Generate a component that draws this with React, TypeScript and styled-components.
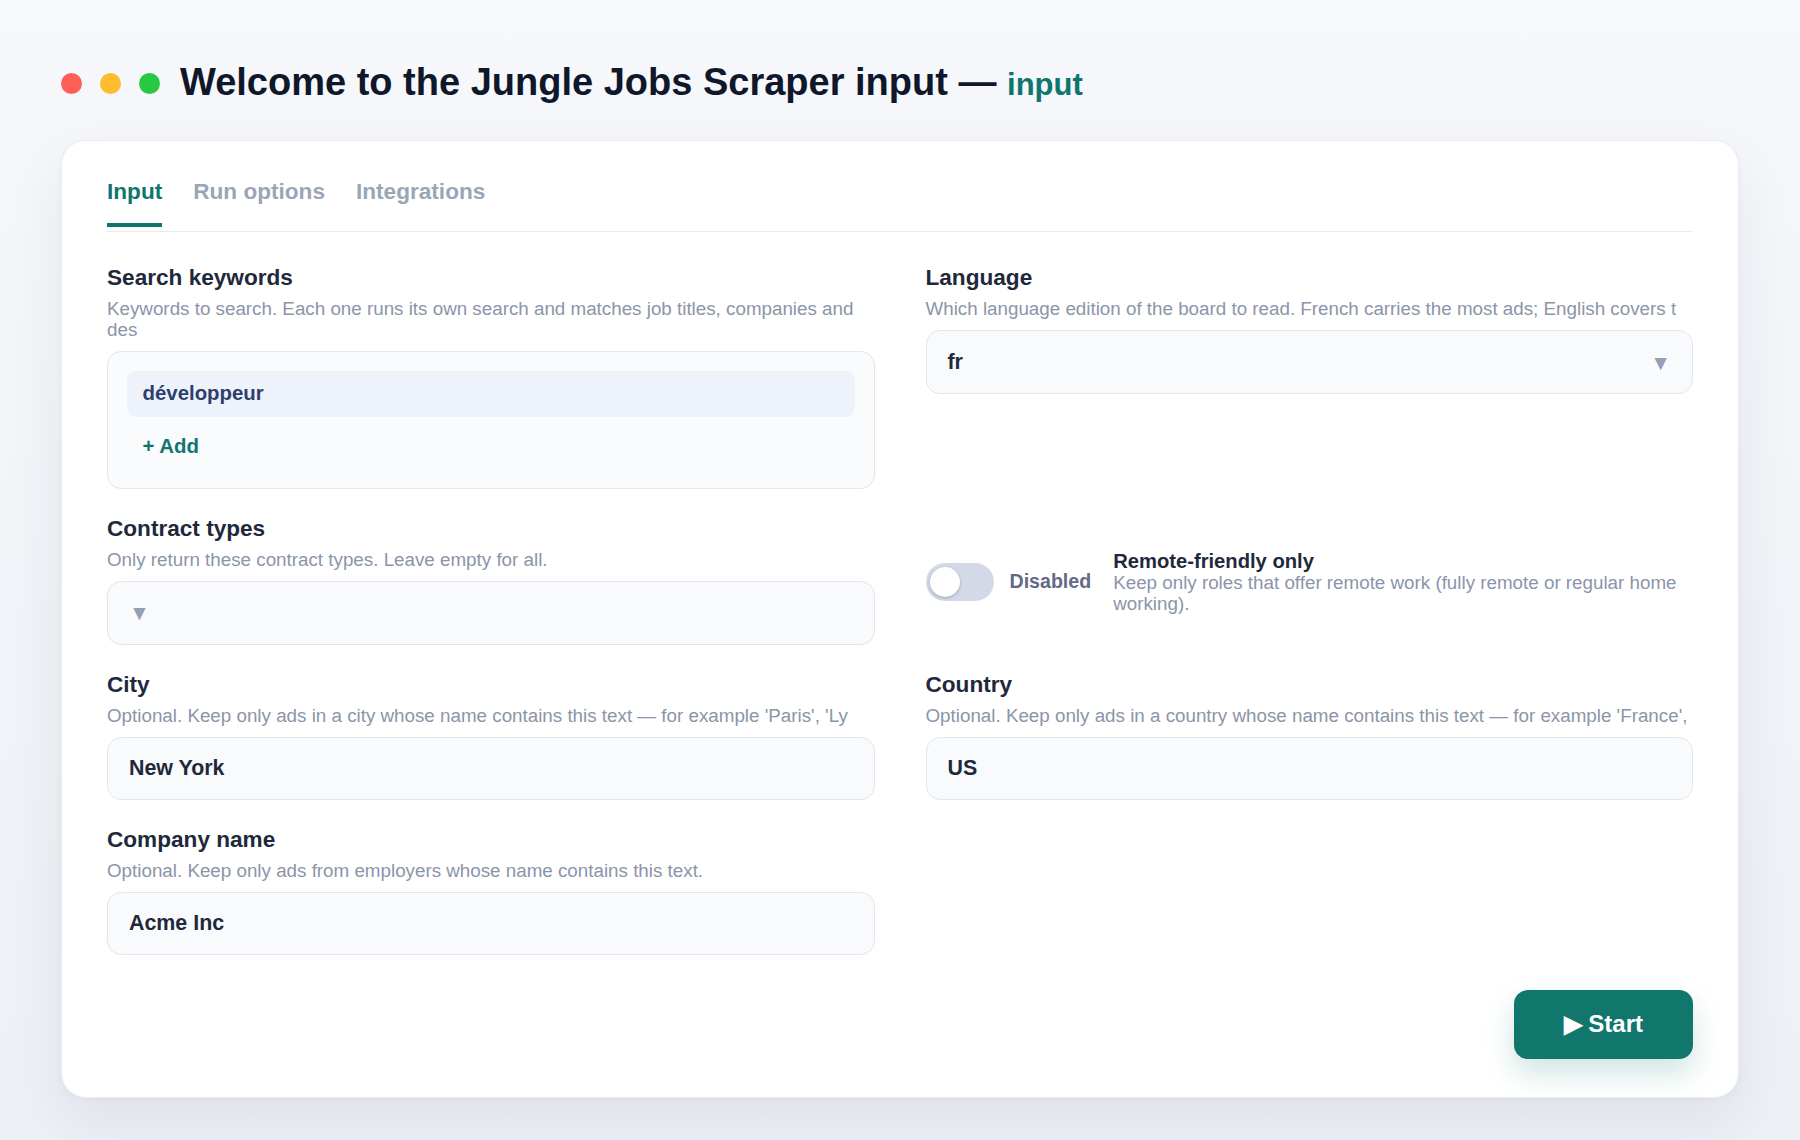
import React, { useState } from 'react';
import styled, { createGlobalStyle } from 'styled-components';

const GlobalStyle = createGlobalStyle`
  * {
    box-sizing: border-box;
  }

  body {
    margin: 0;
    font-family: "Liberation Sans", Arial, sans-serif;
    background: linear-gradient(180deg, #f6f8fb 0%, #f0f3f7 60%, #edf0f5 100%);
    min-height: 100vh;
  }
`;

const Page = styled.div`
  min-height: 100vh;
  padding: 60px 61px 40px;
`;

const Header = styled.header`
  display: flex;
  align-items: center;
  gap: 20px;
  height: 46px;
`;

const Dots = styled.div`
  display: flex;
  gap: 18px;
`;

const Dot = styled.span<{ $color: string }>`
  width: 21px;
  height: 21px;
  border-radius: 50%;
  background: ${(p) => p.$color};
`;

const Title = styled.h1`
  margin: 0;
  font-size: 38px;
  line-height: 46px;
  font-weight: 700;
  color: #0f172a;
  white-space: nowrap;
`;

const TitleAccent = styled.span`
  font-size: 31px;
  font-weight: 600;
  color: #0f766e;
`;

const Card = styled.main`
  margin-top: 34px;
  background: #ffffff;
  border: 1px solid #e9edf3;
  border-radius: 25px;
  padding: 38px 45px 38px;
  box-shadow: 0 24px 60px rgba(30, 41, 70, 0.07), 0 2px 6px rgba(30, 41, 70, 0.03);
`;

const TabBar = styled.nav`
  display: flex;
  gap: 31px;
  border-bottom: 1px solid #e8ecf1;
`;

const Tab = styled.button<{ $active?: boolean }>`
  background: none;
  border: none;
  padding: 0 0 18px;
  margin-bottom: 4px;
  font-family: inherit;
  font-size: 22.6px;
  line-height: 26px;
  font-weight: 700;
  color: ${(p) => (p.$active ? '#0f766e' : '#9aa5b8')};
  border-bottom: 4px solid ${(p) => (p.$active ? '#0f766e' : 'transparent')};
  cursor: pointer;
`;

const FormGrid = styled.div`
  margin-top: 33px;
  display: grid;
  grid-template-columns: 1fr 1fr;
  column-gap: 51px;
  row-gap: 27px;
  align-items: start;
`;

const Field = styled.div`
  display: flex;
  flex-direction: column;
  min-width: 0;
`;

const Label = styled.label`
  font-size: 22.6px;
  line-height: 26px;
  font-weight: 700;
  color: #1e293b;
`;

const Description = styled.p`
  margin: 7px 0 11px;
  font-size: 18.8px;
  line-height: 21px;
  color: #8b95a9;
`;

const KeywordBox = styled.div`
  display: flex;
  flex-direction: column;
  align-items: stretch;
  gap: 9px;
  padding: 18.5px 18.5px 22px;
  background: #f9fbfd;
  border: 1.5px solid #e2e7ee;
  border-radius: 14px;
`;

const Chip = styled.div`
  height: 46px;
  display: flex;
  align-items: center;
  padding: 0 16px;
  border-radius: 10px;
  background: #eef2fb;
  font-size: 20.4px;
  font-weight: 700;
  color: #2f3f6c;
`;

const AddButton = styled.button`
  align-self: flex-start;
  background: none;
  border: none;
  padding: 8px 16px;
  font-family: inherit;
  font-size: 20.4px;
  line-height: 24px;
  font-weight: 700;
  color: #0f766e;
  cursor: pointer;
`;

const Control = styled.div`
  height: 64px;
  display: flex;
  align-items: center;
  justify-content: space-between;
  padding: 0 21px;
  background: #f9fafc;
  border: 1.5px solid #e2e6ee;
  border-radius: 14px;
`;

const TextInput = styled.input`
  height: 63px;
  width: 100%;
  padding: 0 21px;
  background: #f9fafc;
  border: 1.5px solid #e2e6ee;
  border-radius: 14px;
  font-family: inherit;
  font-size: 21.4px;
  font-weight: 700;
  color: #1e293b;
  outline: none;
`;

const SelectValue = styled.span`
  font-size: 21.4px;
  font-weight: 700;
  color: #1e293b;
`;

const Caret = styled.span`
  font-size: 21px;
  color: #94a0b4;
  line-height: 1;
`;

const ToggleRow = styled.div`
  align-self: center;
  display: flex;
  align-items: center;
  padding-top: 3px;
`;

const Switch = styled.button<{ $on: boolean }>`
  position: relative;
  flex: none;
  width: 68px;
  height: 38px;
  border: none;
  border-radius: 19px;
  padding: 0;
  background: ${(p) => (p.$on ? '#0f766e' : '#d3d9e6')};
  cursor: pointer;

  &::after {
    content: '';
    position: absolute;
    top: 4px;
    left: ${(p) => (p.$on ? '34px' : '4px')};
    width: 30px;
    height: 30px;
    border-radius: 50%;
    background: #ffffff;
    box-shadow: 0 1px 3px rgba(30, 41, 70, 0.3);
  }
`;

const SwitchState = styled.span`
  margin: 0 22px 0 16px;
  font-size: 19.6px;
  font-weight: 700;
  color: #606b84;
  white-space: nowrap;
`;

const ToggleText = styled.div`
  display: flex;
  flex-direction: column;
  min-width: 0;
`;

const ToggleTitle = styled.span`
  font-size: 20.2px;
  line-height: 22px;
  font-weight: 700;
  color: #1e293b;
`;

const ToggleDescription = styled.span`
  font-size: 18.8px;
  line-height: 21px;
  color: #8b95a9;
`;

const Footer = styled.div`
  margin-top: 35px;
  display: flex;
  justify-content: flex-end;
`;

const StartButton = styled.button`
  height: 69px;
  padding: 0 50px;
  border: none;
  border-radius: 14px;
  background: #11766c;
  color: #ffffff;
  font-family: inherit;
  font-size: 24px;
  font-weight: 700;
  box-shadow: 0 14px 30px rgba(17, 118, 108, 0.2);
  cursor: pointer;
`;

const App = () => {
  const [tab, setTab] = useState('Input');
  const [remote, setRemote] = useState(false);
  const [city, setCity] = useState('New York');
  const [country, setCountry] = useState('US');
  const [company, setCompany] = useState('Acme Inc');

  return (
    <>
      <GlobalStyle />
      <Page>
        <Header>
          <Dots>
            <Dot $color="#ff5f57" />
            <Dot $color="#febc2e" />
            <Dot $color="#28c840" />
          </Dots>
          <Title>
            Welcome to the Jungle Jobs Scraper input — <TitleAccent>input</TitleAccent>
          </Title>
        </Header>

        <Card>
          <TabBar>
            {['Input', 'Run options', 'Integrations'].map((name) => (
              <Tab key={name} $active={tab === name} onClick={() => setTab(name)}>
                {name}
              </Tab>
            ))}
          </TabBar>

          <FormGrid>
            <Field>
              <Label>Search keywords</Label>
              <Description>
                Keywords to search. Each one runs its own search and matches job titles, companies and des
              </Description>
              <KeywordBox>
                <Chip>développeur</Chip>
                <AddButton>+ Add</AddButton>
              </KeywordBox>
            </Field>

            <Field>
              <Label>Language</Label>
              <Description>
                Which language edition of the board to read. French carries the most ads; English covers t
              </Description>
              <Control>
                <SelectValue>fr</SelectValue>
                <Caret>▼</Caret>
              </Control>
            </Field>

            <Field>
              <Label>Contract types</Label>
              <Description>Only return these contract types. Leave empty for all.</Description>
              <Control>
                <Caret>▼</Caret>
              </Control>
            </Field>

            <ToggleRow>
              <Switch $on={remote} onClick={() => setRemote(!remote)} />
              <SwitchState>{remote ? 'Enabled' : 'Disabled'}</SwitchState>
              <ToggleText>
                <ToggleTitle>Remote-friendly only</ToggleTitle>
                <ToggleDescription>
                  Keep only roles that offer remote work (fully remote or regular home working).
                </ToggleDescription>
              </ToggleText>
            </ToggleRow>

            <Field>
              <Label>City</Label>
              <Description>
                Optional. Keep only ads in a city whose name contains this text — for example 'Paris', 'Ly
              </Description>
              <TextInput value={city} onChange={(e) => setCity(e.target.value)} />
            </Field>

            <Field>
              <Label>Country</Label>
              <Description>
                Optional. Keep only ads in a country whose name contains this text — for example 'France',
              </Description>
              <TextInput value={country} onChange={(e) => setCountry(e.target.value)} />
            </Field>

            <Field>
              <Label>Company name</Label>
              <Description>Optional. Keep only ads from employers whose name contains this text.</Description>
              <TextInput value={company} onChange={(e) => setCompany(e.target.value)} />
            </Field>
          </FormGrid>

          <Footer>
            <StartButton>▶ Start</StartButton>
          </Footer>
        </Card>
      </Page>
    </>
  );
};

export default App;
